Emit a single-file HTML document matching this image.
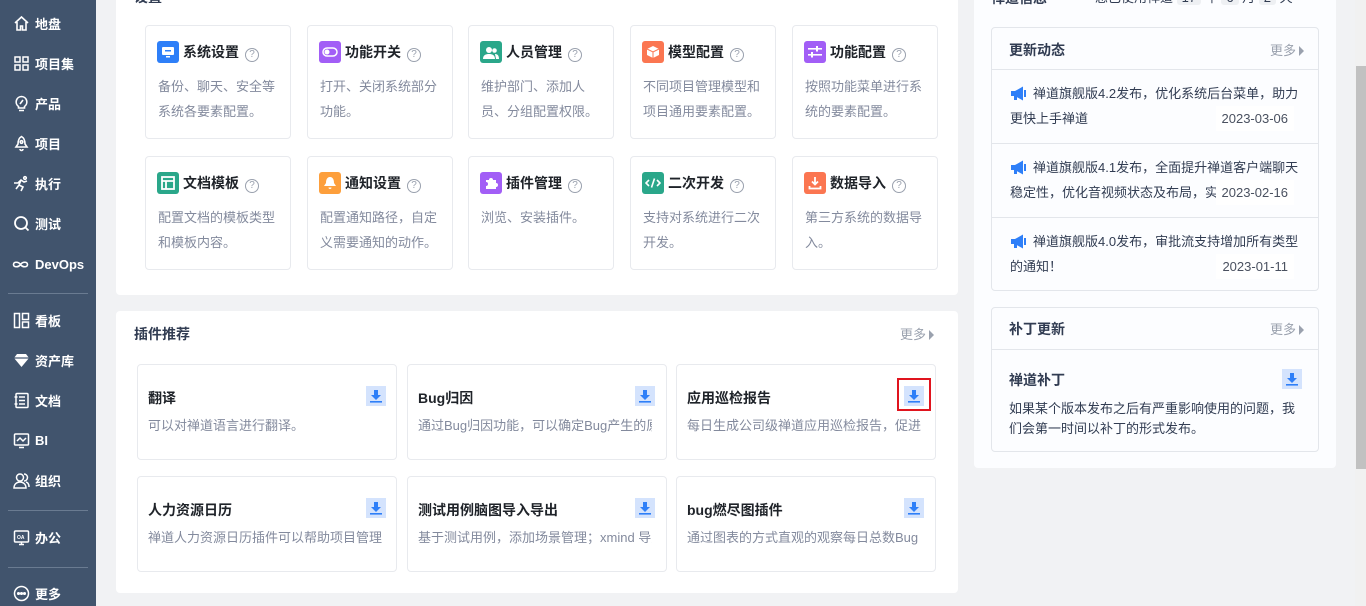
<!DOCTYPE html>
<html><head><meta charset="utf-8"><style>
*{margin:0;padding:0;box-sizing:border-box}
body{width:1366px;height:606px;overflow:hidden;background:#f1f2f4;font-family:"Liberation Sans","Noto Sans CJK SC",sans-serif;font-size:13px;color:#313c52;position:relative}
.abs{position:absolute}
#side{left:0;top:0;width:96px;height:606px;background:#41546d}
.ni{position:absolute;left:13px;color:#fff;font-weight:bold;font-size:13px;display:flex;align-items:center;gap:5px;height:20px}
.ni svg{width:17px;height:17px}
.sep{position:absolute;left:8px;width:80px;height:1px;background:#6a7b91}
.panel{background:#fff;border-radius:4px;position:absolute}
.sc{position:absolute;width:146px;height:114px;border:1px solid #e8eaee;border-radius:4px;background:#fff}
.sc .ic{position:absolute;left:11px;top:15px;width:22px;height:22px;border-radius:3px;display:flex;align-items:center;justify-content:center}
.sc .t{position:absolute;left:37px;top:16px;font-size:14px;font-weight:bold;color:#1f2329;line-height:20px;white-space:nowrap}
.q{display:inline-block;width:14px;height:14px;border:1.3px solid #9aa1ae;border-radius:50%;font-size:10px;line-height:12px;text-align:center;color:#9aa1ae;font-weight:normal;margin-left:6px;vertical-align:0px}
.sc .d{position:absolute;left:12px;top:48px;width:125px;color:#838a9d;line-height:25px;font-size:13px}
.pc{position:absolute;width:260px;height:96px;border:1px solid #e8eaee;border-radius:4px;background:#fff}
.pc .t{position:absolute;left:10px;top:23px;font-size:14px;font-weight:bold;color:#1f2329}
.pc .d{position:absolute;left:10px;top:51px;width:234px;color:#838a9d;white-space:nowrap;overflow:hidden;line-height:20px}
.dl{position:absolute;width:20px;height:20px;background:#d4e3fd;display:flex;align-items:center;justify-content:center}
.more{position:absolute;color:#9aa1ae;font-size:13px}
.more:after{content:"";display:inline-block;border-left:5px solid #9aa1ae;border-top:5px solid transparent;border-bottom:5px solid transparent;margin-left:3px;vertical-align:-1px}
.box{position:absolute;border:1px solid #e3e6eb;border-radius:4px;background:#fcfdff}
.nw{position:absolute;left:18px;width:290px;line-height:25px;color:#313c52}
.nw svg{vertical-align:-3px;margin-right:5px}
.dt{position:absolute;right:24px;background:#fff;color:#4a5160;padding:0 6px;line-height:25px}
</style></head><body>
<div id="side" class="abs">
<div class="ni" style="top:13px"><svg viewBox="0 0 17 17" fill="none" stroke="#fff" stroke-width="1.6"><path d="M2 8L8.5 2 15 8M4 7v8h3.5v-4h2v4H13V7"/></svg>地盘</div>
<div class="ni" style="top:53px"><svg viewBox="0 0 17 17" fill="none" stroke="#fff" stroke-width="1.5"><rect x="2" y="2" width="5" height="5"/><rect x="10" y="2" width="5" height="5"/><rect x="2" y="10" width="5" height="5"/><rect x="10" y="10" width="5" height="5"/></svg>项目集</div>
<div class="ni" style="top:93px"><svg viewBox="0 0 17 17" fill="none" stroke="#fff" stroke-width="1.6"><path d="M8.5 1.5a5.5 5.5 0 0 0-3 10V13h6v-1.5a5.5 5.5 0 0 0-3-10zM6 15.5h5M7 9l3-4"/></svg>产品</div>
<div class="ni" style="top:133px"><svg viewBox="0 0 17 17" fill="none" stroke="#fff" stroke-width="1.6"><path d="M8.5 1.5C6 3 5 6 5 9l-2 3h11l-2-3c0-3-1-6-3.5-7.5zM7 14a1.5 1.5 0 0 0 3 0"/><circle cx="8.5" cy="7" r="1.3"/></svg>项目</div>
<div class="ni" style="top:173px"><svg viewBox="0 0 17 17" fill="none" stroke="#fff" stroke-width="1.6"><path d="M1 8h4l3-3 3 2 3-1M8 5l-2 5 4 2-2 4M6 10l-3 4"/><circle cx="12" cy="3" r="1.3"/></svg>执行</div>
<div class="ni" style="top:213px"><svg viewBox="0 0 17 17" fill="none" stroke="#fff" stroke-width="1.8"><circle cx="8" cy="8" r="6"/><path d="M12 12l3.5 3.5"/></svg>测试</div>
<div class="ni" style="top:254px;left:11px"><svg viewBox="0 0 19 17" style="width:19px" fill="none" stroke="#fff" stroke-width="1.6"><path d="M9.5 8.5c-2-3-7-3-7 0s5 3 7 0 7-3 7 0-5 3-7 0"/></svg>DevOps</div>
<div class="sep" style="top:293px"></div>
<div class="ni" style="top:310px"><svg viewBox="0 0 17 17" fill="none" stroke="#fff" stroke-width="1.5"><rect x="1.5" y="1.5" width="5" height="14"/><rect x="9.5" y="1.5" width="6" height="6"/><rect x="9.5" y="10" width="6" height="5.5"/></svg>看板</div>
<div class="ni" style="top:350px"><svg viewBox="0 0 17 17" fill="#fff"><path d="M4 2h9l3 4-7.5 9L1 6z"/><path d="M1 6h15" stroke="#41546d" stroke-width="1.2"/></svg>资产库</div>
<div class="ni" style="top:390px"><svg viewBox="0 0 17 17" fill="none" stroke="#fff" stroke-width="1.5"><rect x="3" y="1.5" width="12" height="14" rx="1"/><path d="M6 5h6M6 8.5h6M6 12h6M1.5 5h3M1.5 12h3"/></svg>文档</div>
<div class="ni" style="top:430px"><svg viewBox="0 0 17 17" fill="none" stroke="#fff" stroke-width="1.5"><rect x="1.5" y="2" width="14" height="11" rx="1"/><path d="M4 9l3-3 3 3 3-3M6 15.5h5"/></svg>BI</div>
<div class="ni" style="top:470px"><svg viewBox="0 0 17 17" fill="none" stroke="#fff" stroke-width="1.5"><circle cx="7" cy="5.5" r="3.5"/><path d="M1 16c0-4 3-6 6-6s6 2 6 6zM11 2a3.5 3.5 0 0 1 0 7M13 10c2 .5 3 2.5 3 5"/></svg>组织</div>
<div class="sep" style="top:510px"></div>
<div class="ni" style="top:527px"><svg viewBox="0 0 17 17" fill="none" stroke="#fff" stroke-width="1.5"><rect x="1.5" y="2" width="14" height="11" rx="1"/><path d="M6 15.5h5M8.5 13v2.5"/><text x="4" y="10" font-size="5" fill="#fff" stroke="none" font-weight="bold">OA</text></svg>办公</div>
<div class="sep" style="top:567px"></div>
<div class="ni" style="top:583px"><svg viewBox="0 0 17 17" fill="none" stroke="#fff" stroke-width="1.5"><circle cx="8.5" cy="8.5" r="7"/><circle cx="5.5" cy="8.5" r=".8" fill="#fff"/><circle cx="8.5" cy="8.5" r=".8" fill="#fff"/><circle cx="11.5" cy="8.5" r=".8" fill="#fff"/></svg>更多</div>
</div>

<div class="panel" style="left:116px;top:-10px;width:842px;height:305px">
<div class="abs" style="left:18px;top:0;font-size:14px;font-weight:bold;line-height:14px;color:#313c52">设置</div>
</div>
<div class="sc" style="left:145px;top:25px"><div class="ic" style="background:#2e7ff8"><svg width="14" height="12"><rect x="1" y="1" width="12" height="8" rx="1" fill="#fff"/><rect x="4" y="4" width="6" height="1.5" fill="#2e7ff8"/><rect x="5" y="10" width="4" height="1.5" fill="#fff"/></svg></div><div class="t">系统设置<span class="q">?</span></div><div class="d">备份、聊天、安全等系统各要素配置。</div></div>
<div class="sc" style="left:307px;top:25px"><div class="ic" style="background:#a25ef6"><svg width="16" height="10"><rect x="1" y="1" width="14" height="8" rx="4" fill="none" stroke="#fff" stroke-width="1.5"/><circle cx="5" cy="5" r="2.5" fill="#fff"/></svg></div><div class="t">功能开关<span class="q">?</span></div><div class="d">打开、关闭系统部分功能。</div></div>
<div class="sc" style="left:468px;top:25px"><div class="ic" style="background:#2aa78a"><svg width="16" height="13" fill="#fff"><circle cx="6" cy="4" r="3"/><circle cx="11.5" cy="4.5" r="2.3"/><path d="M0 13c0-4 3-5 6-5s6 1 6 5zM12 8c2 0 4 1 4 5h-3"/></svg></div><div class="t">人员管理<span class="q">?</span></div><div class="d">维护部门、添加人员、分组配置权限。</div></div>
<div class="sc" style="left:630px;top:25px"><div class="ic" style="background:#fb7651"><svg width="14" height="14" fill="#fff"><path d="M7 1l6 3v6l-6 3-6-3V4z"/><path d="M1 4l6 3 6-3M7 7v6" stroke="#fb7651" stroke-width="1"/></svg></div><div class="t">模型配置<span class="q">?</span></div><div class="d">不同项目管理模型和项目通用要素配置。</div></div>
<div class="sc" style="left:792px;top:25px"><div class="ic" style="background:#a25ef6"><svg width="14" height="12" fill="#fff"><rect x="0" y="2" width="14" height="1.6"/><rect x="0" y="8" width="14" height="1.6"/><rect x="8" y="0" width="2" height="5.5"/><rect x="3" y="6" width="2" height="5.5"/></svg></div><div class="t">功能配置<span class="q">?</span></div><div class="d">按照功能菜单进行系统的要素配置。</div></div>
<div class="sc" style="left:145px;top:156px"><div class="ic" style="background:#2aa78a"><svg width="14" height="14" fill="none" stroke="#fff" stroke-width="1.8"><rect x="1" y="1" width="12" height="12"/><path d="M1 5h12M5 5v8"/></svg></div><div class="t">文档模板<span class="q">?</span></div><div class="d">配置文档的模板类型和模板内容。</div></div>
<div class="sc" style="left:307px;top:156px"><div class="ic" style="background:#fd9f3c"><svg width="14" height="14" fill="#fff"><path d="M7 1c-3 0-4 3-4 6l-2 3h12l-2-3c0-3-1-6-4-6zM5.5 11.5h3a1.5 1.5 0 0 1-3 0z"/></svg></div><div class="t">通知设置<span class="q">?</span></div><div class="d">配置通知路径，自定义需要通知的动作。</div></div>
<div class="sc" style="left:468px;top:156px"><div class="ic" style="background:#a25ef6"><svg width="14" height="14" fill="#fff"><path d="M2 4h3a2 2 0 1 1 4 0h3v3a2 2 0 1 1 0 4v2H2v-3a2 2 0 1 0 0-4z"/></svg></div><div class="t">插件管理<span class="q">?</span></div><div class="d">浏览、安装插件。</div></div>
<div class="sc" style="left:630px;top:156px"><div class="ic" style="background:#2aa78a"><svg width="16" height="12" fill="none" stroke="#fff" stroke-width="1.6"><path d="M4 3L1 6l3 3M12 3l3 3-3 3M9.5 1.5l-3 9"/></svg></div><div class="t">二次开发<span class="q">?</span></div><div class="d">支持对系统进行二次开发。</div></div>
<div class="sc" style="left:792px;top:156px"><div class="ic" style="background:#fb7651"><svg width="14" height="14" fill="none" stroke="#fff" stroke-width="1.8"><path d="M7 1v7M4 5.5l3 3 3-3M1.5 10v2.5h11V10"/></svg></div><div class="t">数据导入<span class="q">?</span></div><div class="d">第三方系统的数据导入。</div></div>

<div class="panel" style="left:116px;top:311px;width:842px;height:282px">
<div class="abs" style="left:18px;top:13px;font-size:14px;font-weight:bold;color:#313c52">插件推荐</div>
<div class="more" style="right:24px;top:13px">更多</div>
</div>
<div class="pc" style="left:137px;top:364px"><div class="t">翻译</div><div class="d">可以对禅道语言进行翻译。</div></div>
<div class="pc" style="left:407px;top:364px"><div class="t">Bug归因</div><div class="d">通过Bug归因功能，可以确定Bug产生的原因</div></div>
<div class="pc" style="left:676px;top:364px"><div class="t">应用巡检报告</div><div class="d">每日生成公司级禅道应用巡检报告，促进</div></div>
<div class="pc" style="left:137px;top:476px"><div class="t">人力资源日历</div><div class="d">禅道人力资源日历插件可以帮助项目管理</div></div>
<div class="pc" style="left:407px;top:476px"><div class="t">测试用例脑图导入导出</div><div class="d">基于测试用例，添加场景管理；xmind 导入</div></div>
<div class="pc" style="left:676px;top:476px"><div class="t">bug燃尽图插件</div><div class="d">通过图表的方式直观的观察每日总数Bug</div></div>
<div class="dl" style="left:366px;top:386px"><svg width="12" height="13" fill="#2e7ff8"><path d="M4 0h4v5h3L6 10 1 5h3z"/><rect x="0" y="11" width="12" height="1.6"/></svg></div>
<div class="dl" style="left:635px;top:386px"><svg width="12" height="13" fill="#2e7ff8"><path d="M4 0h4v5h3L6 10 1 5h3z"/><rect x="0" y="11" width="12" height="1.6"/></svg></div>
<div class="dl" style="left:904px;top:386px"><svg width="12" height="13" fill="#2e7ff8"><path d="M4 0h4v5h3L6 10 1 5h3z"/><rect x="0" y="11" width="12" height="1.6"/></svg></div>
<div class="abs" style="left:897px;top:378px;width:34px;height:33px;border:2px solid #e0141e"></div>
<div class="dl" style="left:366px;top:498px"><svg width="12" height="13" fill="#2e7ff8"><path d="M4 0h4v5h3L6 10 1 5h3z"/><rect x="0" y="11" width="12" height="1.6"/></svg></div>
<div class="dl" style="left:635px;top:498px"><svg width="12" height="13" fill="#2e7ff8"><path d="M4 0h4v5h3L6 10 1 5h3z"/><rect x="0" y="11" width="12" height="1.6"/></svg></div>
<div class="dl" style="left:904px;top:498px"><svg width="12" height="13" fill="#2e7ff8"><path d="M4 0h4v5h3L6 10 1 5h3z"/><rect x="0" y="11" width="12" height="1.6"/></svg></div>

<div class="panel" style="left:974px;top:-10px;width:362px;height:478px;background:#fcfdff">
<div class="abs" style="left:17px;top:0;font-size:14px;font-weight:bold;line-height:16px">禅道信息</div>
<div class="abs" style="left:121px;top:0;line-height:16px;color:#313c52">您已使用禅道 <span style="background:#eef0f3;padding:0 5px;border-radius:3px">17</span> 年 <span style="background:#eef0f3;padding:0 5px;border-radius:3px">6</span> 月 <span style="background:#eef0f3;padding:0 5px;border-radius:3px">2</span> 天</div>
</div>
<div class="box" style="left:991px;top:27px;width:328px;height:264px">
<div class="abs" style="left:17px;top:12px;font-size:14px;font-weight:bold">更新动态</div>
<div class="more" style="right:14px;top:12px">更多</div>
<div class="abs" style="left:0;top:41px;width:100%;height:1px;background:#e3e6eb"></div>
<div class="abs" style="left:0;top:115px;width:100%;height:1px;background:#e3e6eb"></div>
<div class="abs" style="left:0;top:189px;width:100%;height:1px;background:#e3e6eb"></div>
<div class="nw" style="top:53px"><svg width="18" height="15" viewBox="0 0 18 15" fill="#2e7ff8"><path d="M1 5h4l8-4.5v14L5 10H1z"/><rect x="4" y="10" width="3" height="4"/><path d="M15 4v7" stroke="#2e7ff8" stroke-width="2"/></svg>禅道旗舰版4.2发布，优化系统后台菜单，助力更快上手禅道</div>
<div class="dt" style="top:78px">2023-03-06</div>
<div class="nw" style="top:127px;height:50px;overflow:hidden"><svg width="18" height="15" viewBox="0 0 18 15" fill="#2e7ff8"><path d="M1 5h4l8-4.5v14L5 10H1z"/><rect x="4" y="10" width="3" height="4"/><path d="M15 4v7" stroke="#2e7ff8" stroke-width="2"/></svg>禅道旗舰版4.1发布，全面提升禅道客户端聊天稳定性，优化音视频状态及布局，实现</div>
<div class="dt" style="top:152px">2023-02-16</div>
<div class="nw" style="top:201px"><svg width="18" height="15" viewBox="0 0 18 15" fill="#2e7ff8"><path d="M1 5h4l8-4.5v14L5 10H1z"/><rect x="4" y="10" width="3" height="4"/><path d="M15 4v7" stroke="#2e7ff8" stroke-width="2"/></svg>禅道旗舰版4.0发布，审批流支持增加所有类型的通知！</div>
<div class="dt" style="top:226px">2023-01-11</div>
</div>
<div class="box" style="left:991px;top:307px;width:328px;height:145px">
<div class="abs" style="left:17px;top:11px;font-size:14px;font-weight:bold">补丁更新</div>
<div class="more" style="right:14px;top:11px">更多</div>
<div class="abs" style="left:0;top:41px;width:100%;height:1px;background:#e3e6eb"></div>
<div class="abs" style="left:17px;top:62px;font-size:14px;font-weight:bold">禅道补丁</div>
<div class="dl" style="left:290px;top:61px"><svg width="12" height="13" fill="#2e7ff8"><path d="M4 0h4v5h3L6 10 1 5h3z"/><rect x="0" y="11" width="12" height="1.6"/></svg></div>
<div class="abs" style="left:17px;top:91px;width:295px;line-height:20px">如果某个版本发布之后有严重影响使用的问题，我们会第一时间以补丁的形式发布。</div>
</div>
<div class="abs" style="left:1355px;top:0;width:11px;height:606px;background:#f1f1f1"></div>
<div class="abs" style="left:1356px;top:66px;width:10px;height:403px;background:#c1c1c1"></div>
</body></html>
